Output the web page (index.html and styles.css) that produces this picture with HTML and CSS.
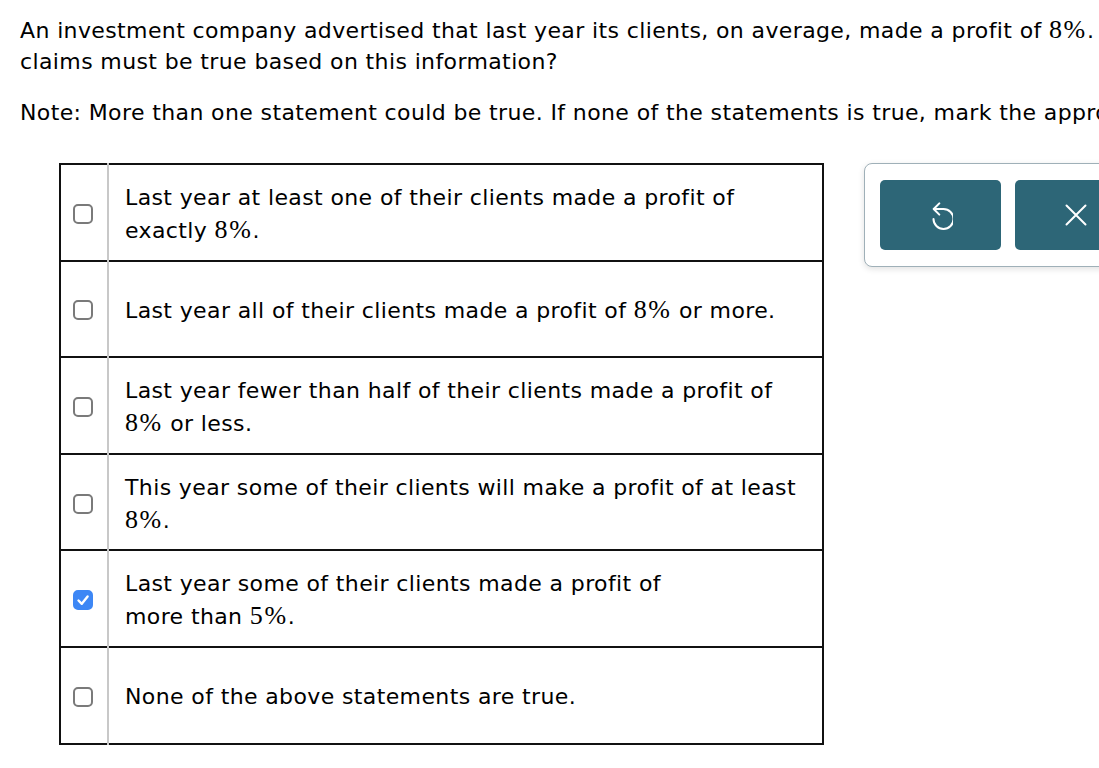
FILE: index.html
```html
<!DOCTYPE html>
<html>
<head>
<meta charset="utf-8">
<link rel="stylesheet" href="styles.css">
</head>
<body>
<div class="page">
  <p class="q">An investment company advertised that last year its clients, on average, made a profit of <span class="m">8%</span>. Which of the following<br>claims must be true based on this information?</p>
  <p class="note">Note: More than one statement could be true. If none of the statements is true, mark the appropriate box.</p>
  <div class="work">
    <table class="choices">
      <tr><td class="cb"><span class="box"></span></td><td class="txt">Last year at least one of their clients made a profit of exactly <span class="m">8%</span>.</td></tr>
      <tr><td class="cb"><span class="box"></span></td><td class="txt">Last year all of their clients made a profit of <span class="m">8%</span> or more.</td></tr>
      <tr><td class="cb"><span class="box"></span></td><td class="txt">Last year fewer than half of their clients made a profit of <span class="m">8%</span> or less.</td></tr>
      <tr><td class="cb"><span class="box"></span></td><td class="txt">This year some of their clients will make a profit of at least <span class="m">8%</span>.</td></tr>
      <tr><td class="cb"><span class="box checked"><svg viewBox="0 0 20 20" width="20" height="20"><path d="M5.5 10.5 L8.8 13.8 L14.6 6.4" fill="none" stroke="#fff" stroke-width="2.4" stroke-linecap="round" stroke-linejoin="round"/></svg></span></td><td class="txt">Last year some of their clients made a profit of<br>more than <span class="m">5%</span>.</td></tr>
      <tr><td class="cb"><span class="box"></span></td><td class="txt">None of the above statements are true.</td></tr>
    </table>
    <div class="panel">
      <button class="btn" aria-label="Undo"><svg class="undo" viewBox="0 0 24 30" width="24" height="30"><path d="M4.5 17 A10 10 0 1 0 14.5 7 L5 7" fill="none" stroke="#fff" stroke-width="2" stroke-linecap="round"/><path d="M10.3 1.4 L4.7 7 L10.3 12.6" fill="none" stroke="#fff" stroke-width="2" stroke-linecap="round" stroke-linejoin="round"/></svg></button>
      <button class="btn" aria-label="Clear"><svg viewBox="0 0 24 24" width="24" height="24"><path d="M2.5 2.5 L21.5 21.5 M21.5 2.5 L2.5 21.5" fill="none" stroke="#fff" stroke-width="2" stroke-linecap="round"/></svg></button>
    </div>
  </div>
</div>
</body>
</html>
```

FILE: styles.css
```css
html, body {
  margin: 0;
  padding: 0;
  background: #fff;
  overflow: hidden;
}
.page {
  width: 1600px;
  padding: 14px 0 0 20px;
  font-family: "DejaVu Sans", Verdana, sans-serif;
  font-size: 22px;
  letter-spacing: 0.38px;
  color: #000;
}
.q {
  margin: 0;
  line-height: 31px;
  white-space: nowrap;
}
.note {
  margin: 20px 0 0 0;
  line-height: 31px;
  white-space: nowrap;
}
.m {
  font-family: "Liberation Serif", "Times New Roman", serif;
  font-size: 26px;
  letter-spacing: 1.6px;
}
.work {
  display: flex;
  align-items: flex-start;
  gap: 40px;
  margin: 35px 0 0 39px;
}
.choices {
  border-collapse: collapse;
  width: 765px;
  border: 2px solid #111;
}
.choices tr {
  height: 96.6px;
  border-bottom: 2px solid #111;
}
.cb {
  width: 46px;
  padding: 0;
  text-align: center;
  vertical-align: middle;
  border-right: 2px solid #c8c8c8;
}
.txt {
  padding: 6px 16px 2px 16px;
  line-height: 32px;
  vertical-align: middle;
}
.box {
  display: inline-block;
  box-sizing: border-box;
  width: 20px;
  height: 20px;
  border: 2px solid #7a7a7a;
  border-radius: 5px;
  vertical-align: middle;
  position: relative;
  left: -1px;
}
.box.checked {
  background: #3d87f5;
  border-color: #3d87f5;
}
.box.checked svg {
  position: absolute;
  left: -2px;
  top: -2px;
}
.panel {
  display: flex;
  gap: 14px;
  padding: 16px 15px;
  border: 1px solid #9fb0b8;
  border-radius: 8px;
  box-shadow: 0 2px 6px rgba(0,0,0,0.12);
  background: #fff;
}
.btn {
  width: 121px;
  height: 70px;
  border: none;
  border-radius: 5px;
  background: #2d6677;
  display: flex;
  align-items: center;
  justify-content: center;
  padding: 0;
}
.undo {
  position: relative;
  top: 2px;
}
```
